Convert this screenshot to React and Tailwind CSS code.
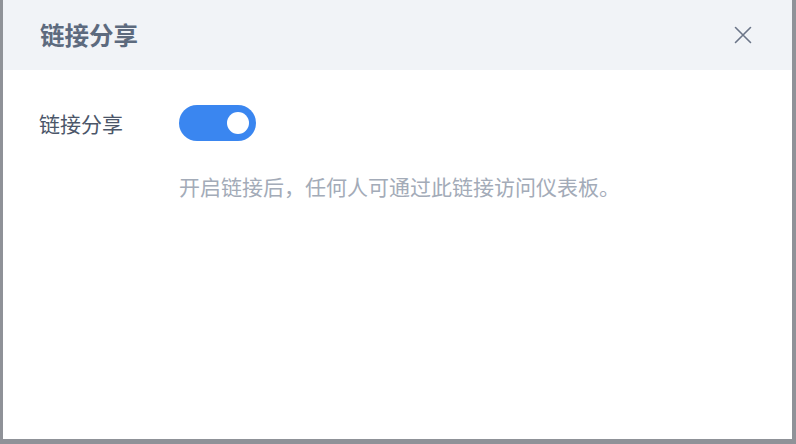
export default function App() {
  return (
    <div
      className="w-[796px] h-[444px] bg-[#8f9298] pl-[3px] pr-[4px] pb-[5px] overflow-hidden"
      style={{ fontFamily: '"Noto Sans CJK SC", "Noto Sans", sans-serif' }}
    >
      <div className="w-full h-full bg-white flex flex-col">
        <div className="h-[70px] bg-[#f1f3f7] flex items-center justify-between pl-[37px] pr-[40px]">
          <span className="text-[24.5px] font-bold text-[#5d6a7e] leading-none">链接分享</span>
          <svg width="18" height="18" viewBox="0 0 18 18" fill="none" stroke="#6b7588" strokeWidth="1.6" strokeLinecap="round">
            <path d="M1.5 1.5 L16.5 16.5 M16.5 1.5 L1.5 16.5" />
          </svg>
        </div>
        <div className="flex flex-col pl-[36px] pt-[35px]">
          <div className="flex items-center h-[36px]">
            <span className="w-[140px] text-[21px] text-[#4b5669] leading-none">链接分享</span>
            <div className="w-[77px] h-[36px] rounded-full bg-[#3a86f0] flex items-center justify-end pr-[7px]">
              <div className="w-[22px] h-[22px] rounded-full bg-white" />
            </div>
          </div>
          <div className="pl-[140px] mt-[35px] text-[21px] text-[#a3abb8] leading-none">
            开启链接后，任何人可通过此链接访问仪表板。
          </div>
        </div>
      </div>
    </div>
  );
}
